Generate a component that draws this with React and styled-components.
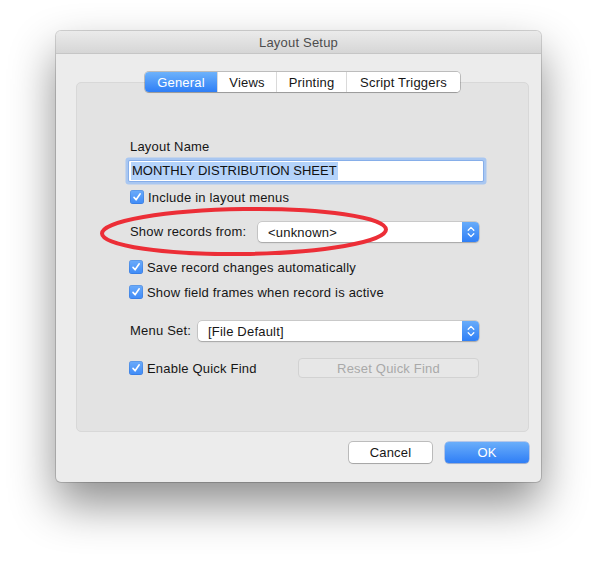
import React from "react";
import styled, { createGlobalStyle } from "styled-components";

const GlobalStyle = createGlobalStyle`
  html, body {
    margin: 0;
    padding: 0;
    background: #fff;
  }
  body {
    font-family: "Liberation Sans", Arial, sans-serif;
    font-size: 13px;
    letter-spacing: 0.2px;
    color: #161616;
  }
`;

const Page = styled.div`
  width: 597px;
  height: 562px;
  padding: 31px 0 0 56px;
  box-sizing: border-box;
`;

const Window = styled.div`
  position: relative;
  width: 485px;
  height: 451px;
  background: #ececec;
  border-radius: 5px;
  box-shadow: 0 0 0 1px rgba(0, 0, 0, 0.16), 0 22px 46px rgba(0, 0, 0, 0.45);
  display: flex;
  flex-direction: column;
`;

const TitleBar = styled.div`
  height: 23px;
  box-sizing: border-box;
  border-radius: 5px 5px 0 0;
  background: linear-gradient(#ebebeb, #d6d6d6);
  border-bottom: 1px solid #c6c6c6;
  display: flex;
  align-items: center;
  justify-content: center;
  color: #4d4d4d;
`;

const Body = styled.div`
  padding: 18px 12px 0 20px;
  display: flex;
  flex-direction: column;
`;

const TabBar = styled.div`
  position: relative;
  z-index: 1;
  align-self: center;
  display: flex;
  height: 20px;
  margin-bottom: -10px;
  background: #fff;
  border-radius: 4px;
  box-shadow: 0 0 0 1px rgba(0, 0, 0, 0.2), 0 1px 1px rgba(0, 0, 0, 0.15);
  overflow: hidden;
`;

const Tab = styled.div`
  width: ${(p) => p.$w}px;
  display: flex;
  align-items: center;
  justify-content: center;
  color: ${(p) => (p.$active ? "#fff" : "#161616")};
  background: ${(p) =>
    p.$active ? "linear-gradient(#6db2fb, #2e7ef6)" : "#fff"};
  border-left: ${(p) => (p.$first ? "none" : "1px solid #dadada")};
`;

const Group = styled.div`
  height: 350px;
  box-sizing: border-box;
  background: #e3e3e3;
  border: 1px solid #d8d8d8;
  border-radius: 5px;
  padding: 56px 49px 0 53px;
  display: flex;
  flex-direction: column;
`;

const Label = styled.div`
  line-height: 16px;
  margin-top: ${(p) => p.$mt || 0}px;
  white-space: nowrap;
`;

const TextField = styled.div`
  margin: 6px 0 0 -1px;
  width: 354px;
  height: 20px;
  box-sizing: border-box;
  background: #fff;
  padding: 2px 0 0 2px;
  box-shadow: 0 0 0 1px #86aee9, 0 0 0 3.5px #a9c7f1;
  border-radius: 1px;
`;

const Selection = styled.span`
  display: inline-block;
  height: 18px;
  line-height: 18px;
  padding: 0 1px;
  letter-spacing: 0;
  background: #b4d3fa;
  color: #111;
  margin-top: -1px;
`;

const Row = styled.div`
  display: flex;
  align-items: center;
  height: ${(p) => p.$h || 16}px;
  margin-top: ${(p) => p.$mt || 0}px;
`;

const CheckRow = styled.label`
  display: flex;
  align-items: center;
  gap: 4px;
  white-space: nowrap;
`;

const Box = styled.span`
  width: 14px;
  height: 14px;
  border-radius: 3px;
  background: linear-gradient(#6cacfa, #3f8bf7);
  box-shadow: inset 0 0 0 0.5px rgba(0, 40, 120, 0.25);
  display: flex;
  align-items: center;
  justify-content: center;
  margin-left: ${(p) => p.$ml || 0}px;
`;

const Popup = styled.div`
  margin-left: auto;
  width: ${(p) => p.$w}px;
  height: 20px;
  display: flex;
  background: #fff;
  border-radius: 4px;
  box-shadow: 0 0 0 0.5px rgba(0, 0, 0, 0.22), 0 1px 1.5px rgba(0, 0, 0, 0.18);
`;

const PopupText = styled.div`
  flex: 1;
  display: flex;
  align-items: center;
  padding-left: 10px;
`;

const PopupArrow = styled.div`
  width: 17px;
  border-radius: 0 4px 4px 0;
  background: linear-gradient(#68acfa, #2f7ff6);
  display: flex;
  align-items: center;
  justify-content: center;
`;

const DisabledButton = styled.div`
  margin-left: auto;
  width: 181px;
  height: 20px;
  box-sizing: border-box;
  border-radius: 4px;
  background: #e7e7e7;
  border: 1px solid #d2d2d2;
  color: #a9a9a9;
  display: flex;
  align-items: center;
  justify-content: center;
`;

const Footer = styled.div`
  display: flex;
  justify-content: flex-end;
  gap: 13px;
  margin-top: 10px;
`;

const Button = styled.div`
  width: ${(p) => p.$w}px;
  height: 21px;
  box-sizing: border-box;
  border-radius: 4px;
  display: flex;
  align-items: center;
  justify-content: center;
  color: ${(p) => (p.$primary ? "#fff" : "#161616")};
  background: ${(p) =>
    p.$primary ? "linear-gradient(#6aaefa, #2f7ef6)" : "#fff"};
  box-shadow: ${(p) =>
    p.$primary
      ? "0 0 0 0.5px rgba(20, 90, 220, 0.5), 0 1px 1px rgba(0, 0, 0, 0.15)"
      : "0 0 0 1px rgba(0, 0, 0, 0.2), 0 1px 1px rgba(0, 0, 0, 0.12)"};
`;

const Annotation = styled.svg`
  position: absolute;
  left: 40px;
  top: 174px;
  overflow: visible;
  pointer-events: none;
`;

const Check = () => (
  <svg width="10" height="10" viewBox="0 0 10 10">
    <path
      d="M2 5.4 L4.1 7.8 L8.2 1.8"
      fill="none"
      stroke="#fff"
      strokeWidth="1.6"
      strokeLinecap="round"
      strokeLinejoin="round"
    />
  </svg>
);

const Chevrons = () => (
  <svg width="8" height="14" viewBox="0 0 8 14">
    <path
      d="M1.2 5.2 L4 2.4 L6.8 5.2 M1.2 8.8 L4 11.6 L6.8 8.8"
      fill="none"
      stroke="#fff"
      strokeWidth="1.3"
      strokeLinecap="round"
      strokeLinejoin="round"
    />
  </svg>
);

const Checkbox = ({ children, ml }) => (
  <CheckRow>
    <Box $ml={ml}>
      <Check />
    </Box>
    {children}
  </CheckRow>
);

const tabs = [
  { name: "General", w: 72 },
  { name: "Views", w: 58 },
  { name: "Printing", w: 69 },
  { name: "Script Triggers", w: 113 },
];

export default function App() {
  return (
    <Page>
      <GlobalStyle />
      <Window>
        <TitleBar>Layout Setup</TitleBar>
        <Body>
          <TabBar>
            {tabs.map((t, i) => (
              <Tab key={t.name} $w={t.w} $active={i === 0} $first={i === 0}>
                {t.name}
              </Tab>
            ))}
          </TabBar>
          <Group>
            <Label>Layout Name</Label>
            <TextField>
              <Selection>MONTHLY DISTRIBUTION SHEET</Selection>
            </TextField>
            <Row $mt={8}>
              <Checkbox>Include in layout menus</Checkbox>
            </Row>
            <Row $mt={17} $h={20}>
              <Label>Show records from:</Label>
              <Popup $w={221}>
                <PopupText>&lt;unknown&gt;</PopupText>
                <PopupArrow>
                  <Chevrons />
                </PopupArrow>
              </Popup>
            </Row>
            <Row $mt={17}>
              <Checkbox ml={-1}>Save record changes automatically</Checkbox>
            </Row>
            <Row $mt={9}>
              <Checkbox ml={-1}>Show field frames when record is active</Checkbox>
            </Row>
            <Row $mt={21} $h={20}>
              <Label>Menu Set:</Label>
              <Popup $w={281}>
                <PopupText>[File Default]</PopupText>
                <PopupArrow>
                  <Chevrons />
                </PopupArrow>
              </Popup>
            </Row>
            <Row $mt={17} $h={20}>
              <Checkbox ml={-1}>Enable Quick Find</Checkbox>
              <DisabledButton>Reset Quick Find</DisabledButton>
            </Row>
          </Group>
          <Footer>
            <Button $w={83}>Cancel</Button>
            <Button $w={84} $primary>
              OK
            </Button>
          </Footer>
        </Body>
        <Annotation width="296" height="53" viewBox="0 0 296 53">
          <ellipse
            cx="148"
            cy="26.5"
            rx="142"
            ry="22.5"
            fill="none"
            stroke="#ec2e37"
            strokeWidth="4"
            transform="rotate(-0.8 148 26.5)"
          />
        </Annotation>
      </Window>
    </Page>
  );
}
